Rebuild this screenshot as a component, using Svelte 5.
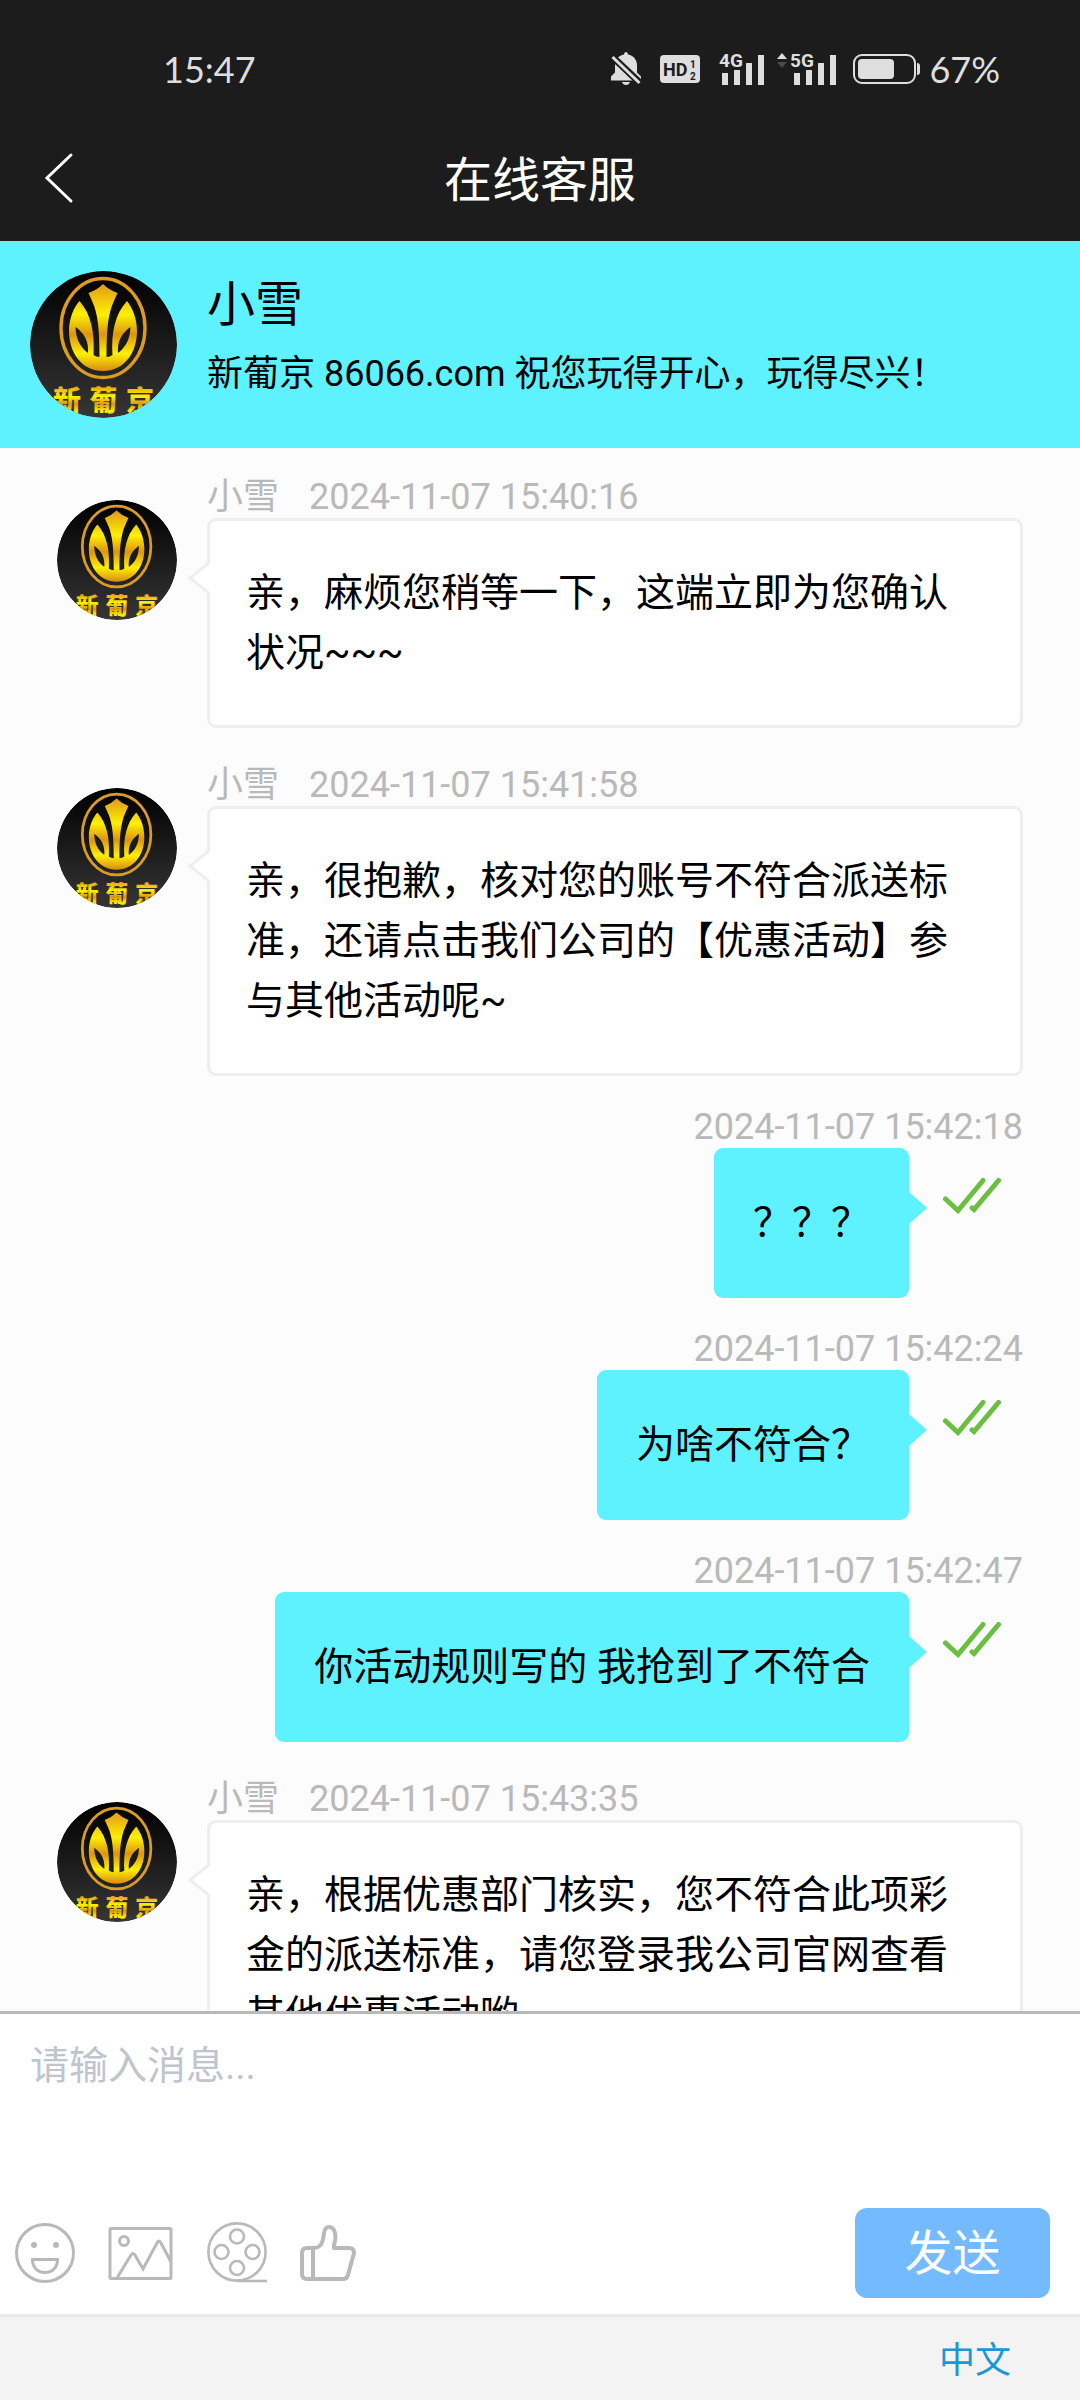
<script>
    const shopName = ["新", "葡", "京"];

    let draft = $state("");

    const messages = [
        {
            from: "小雪",
            time: "2024-11-07 15:40:16",
            text: "亲，麻烦您稍等一下，这端立即为您确认状况~~~",
        },
        {
            from: "小雪",
            time: "2024-11-07 15:41:58",
            text: "亲，很抱歉，核对您的账号不符合派送标准，还请点击我们公司的【优惠活动】参与其他活动呢~",
        },
        { time: "2024-11-07 15:42:18", text: "？？？" },
        { time: "2024-11-07 15:42:24", text: "为啥不符合？" },
        { time: "2024-11-07 15:42:47", text: "你活动规则写的 我抢到了不符合" },
        {
            from: "小雪",
            time: "2024-11-07 15:43:35",
            text: "亲，根据优惠部门核实，您不符合此项彩金的派送标准，请您登录我公司官网查看其他优惠活动哟",
        },
    ];
</script>

{#snippet avatar()}
    <svg viewBox="0 0 147 147" aria-hidden="true">
        <defs>
            <linearGradient id="dark" x1="0" y1="0" x2="0" y2="1">
                <stop offset="0" stop-color="#000" />
                <stop offset="1" stop-color="#363636" />
            </linearGradient>
            <linearGradient id="gold" x1="0" y1="0" x2="0" y2="1">
                <stop offset="0" stop-color="#e39a16" />
                <stop offset="0.35" stop-color="#fdf004" />
                <stop offset="0.58" stop-color="#dd9510" />
                <stop offset="0.8" stop-color="#fdf004" />
                <stop offset="1" stop-color="#d98b12" />
            </linearGradient>
        </defs>
        <circle cx="73.5" cy="73.5" r="73.5" fill="url(#dark)" />
        <ellipse cx="73" cy="57" rx="42" ry="49.5" fill="none" stroke="#dc9c22" stroke-width="3.4" />
        <path
            d="M73 13Q79 19 87.5 22L83.5 31C78 43 76.5 60 76.5 86Q80 86 82.5 84C81 62 85 43 97 30C102 36 107 47 107 60C107 82 94 100 73 100C52 100 39 82 39 60C39 47 44 36 49.5 30C61 43 65 62 63.5 84Q66 86 69.5 86C69.5 60 68 43 62.5 31L58.5 22Q67 19 73 13Z"
            fill="url(#gold)"
        />
        <path d="M45.5 56C54 62 59 70 58 82C50 76 46 68 45.5 56ZM100.5 56C92 62 87 70 88 82C96 76 100 68 100.5 56Z" fill="#1b1b1b" />
        {#each shopName as char, i}
            <text x={37 + i * 36.5} y="140" text-anchor="middle" fill="url(#gold)">{char}</text>
        {/each}
    </svg>
{/snippet}

<div class="page">
    <header>
        <div class="status-bar">
            <span class="clock">15:47</span>
            <div class="status-icons">
                <svg class="bell" width="30" height="34" viewBox="0 0 30 34" fill="#dedede">
                    <path d="M15 0q2 0 2 2.5c6 1 9 6 9 11v7l4 4v4H0v-4l4-4v-7c0-5 3-10 9-11Q13 0 15 0ZM11 30h8q-1 3-4 3t-4-3Z" />
                    <path d="M0 3.5 29 31" stroke="#1c1c1c" stroke-width="7" />
                    <path d="M1.5 5 28.5 31" stroke="#dedede" stroke-width="3" />
                </svg>
                <svg class="hd" width="40" height="28" viewBox="0 0 40 28">
                    <rect width="40" height="28" rx="4" fill="#dedede" />
                    <g fill="#1c1c1c" font-weight="700">
                        <text x="3" y="21" font-size="18">HD</text>
                        <text x="30" y="13" font-size="10">1</text>
                        <text x="30" y="25" font-size="10">2</text>
                    </g>
                </svg>
                <svg class="signal" width="46" height="44" viewBox="0 -6 46 44" fill="#dedede">
                    <text x="0" y="14" font-size="19" font-weight="700">4G</text>
                    <path d="M3 20h6v12H3zM15 17h6v15h-6zM27 10h6v22h-6zM39 2h6v30h-6z" />
                </svg>
                <svg class="signal5" width="60" height="44" viewBox="0 -6 60 44" fill="#dedede">
                    <path d="M0 6 5 0l5 6z" />
                    <path d="M0 9h10l-5 6z" fill="#4a4a4a" />
                    <text x="13" y="14" font-size="19" font-weight="700">5G</text>
                    <path d="M17 20h6v12h-6zM29 17h6v15h-6zM41 10h6v22h-6zM53 2h6v30h-6z" />
                </svg>
                <svg width="68" height="30" viewBox="0 0 68 30">
                    <rect x="1" y="1" width="61" height="28" rx="8" fill="none" stroke="#dedede" stroke-width="2" />
                    <rect x="5" y="5" width="36" height="20" rx="4" fill="#dedede" />
                    <path d="M64 9q3 0 3 3v6q0 3-3 3z" fill="#dedede" />
                </svg>
                <span class="percent">67%</span>
            </div>
        </div>
        <div class="title-bar">
            <button class="back" aria-label="返回">
                <svg width="30" height="52" viewBox="0 0 30 52">
                    <path d="M27 3 3 26l24 23" fill="none" stroke="#fff" stroke-width="3" stroke-linecap="round" />
                </svg>
            </button>
            <h1>在线客服</h1>
        </div>
    </header>

    <section class="agent">
        <div class="agent-avatar">{@render avatar()}</div>
        <div>
            <h2>小雪</h2>
            <p>新葡京 86066.com 祝您玩得开心，玩得尽兴！</p>
        </div>
    </section>

    <main>
        {#each messages as message}
            {#if message.from}
                <article class="message received">
                    <div class="avatar">{@render avatar()}</div>
                    <div class="body">
                        <div class="meta">
                            <span>{message.from}</span>
                            <time>{message.time}</time>
                        </div>
                        <div class="bubble">
                            <svg class="tail" width="23" height="32" viewBox="0 0 23 32">
                                <path d="M23 0 3 16l20 16" fill="#fff" stroke="#eee" stroke-width="3" />
                            </svg>
                            {message.text}
                        </div>
                    </div>
                </article>
            {:else}
                <article class="message sent">
                    <div class="meta"><time>{message.time}</time></div>
                    <div class="row">
                        <div class="bubble">
                            {message.text}
                            <svg class="tail" width="18" height="32" viewBox="0 0 18 32">
                                <path d="M0 0 18 16 0 32z" fill="#5ef1ff" />
                            </svg>
                        </div>
                        <svg class="ticks" width="58" height="36" viewBox="0 0 58 36">
                            <path d="M2.5 21 15 32.5 40 2.500M55.5 2.5 31 31.5l-2-1.5" fill="none" stroke="#6abf40" stroke-width="5" stroke-linecap="round" />
                        </svg>
                    </div>
                </article>
            {/if}
        {/each}
    </main>

    <section class="composer">
        <textarea bind:value={draft} placeholder="请输入消息..." aria-label="请输入消息"></textarea>
        <div class="toolbar">
            <button aria-label="表情">
                <svg width="60" height="60" viewBox="0 0 60 60" stroke-width="3">
                    <circle cx="30" cy="30" r="28.5" />
                    <circle cx="19" cy="22" r="3" class="solid" />
                    <circle cx="41" cy="22" r="3" class="solid" />
                    <path d="M17.5 36.5h25c0 8-5 13-12.5 13s-12.5-5-12.5-13Z" />
                </svg>
            </button>
            <button aria-label="图片">
                <svg width="66" height="60" viewBox="0 0 66 60" stroke-width="3">
                    <rect x="2" y="5.5" width="61" height="50" rx="1" />
                    <circle cx="16" cy="18" r="4.5" />
                    <path d="m9 55 14-23q2-3 4 0l8 14 14-26q2-4 4 0l10 19" />
                </svg>
            </button>
            <button aria-label="视频">
                <svg width="60" height="62" viewBox="0 0 60 62" stroke-width="2.6">
                    <circle cx="30" cy="30" r="28.6" />
                    <circle cx="30" cy="14.5" r="7" />
                    <circle cx="14.5" cy="30" r="7" />
                    <circle cx="45.5" cy="30" r="7" />
                    <circle cx="30" cy="46" r="7" />
                    <path d="M30 59h30" />
                </svg>
            </button>
            <button aria-label="点赞">
                <svg width="57" height="60" viewBox="0 0 57 60" stroke-width="4">
                    <path d="M13 25H7q-5 0-5 5v21q0 5 5 5h36q4 0 5-4l6-22q0-5-5-5H34V22c3-9 1-18-5-18q-4 0-5 6c-1 10-3 15-11 15v31" stroke-linejoin="round" />
                </svg>
            </button>
            <button class="send">发送</button>
        </div>
    </section>

    <footer>
        <a href="#language">中文</a>
    </footer>
</div>

<style>
    :global(body) {
        margin: 0;
    }

    .page {
        display: flex;
        flex-direction: column;
        height: 100vh;
        background: #fcfcfc;
        color: #000;
        font-family: Roboto, "Noto Sans CJK SC", sans-serif;
        overflow: hidden;
    }

    h1,
    h2,
    p {
        margin: 0;
        font-weight: inherit;
    }

    svg {
        display: block;
        flex-shrink: 0;
    }

    button {
        padding: 0;
        border: 0;
        background: none;
        font: inherit;
        cursor: pointer;
    }

    header {
        background: #1c1c1c;
        color: #fff;
    }

    .status-bar {
        display: flex;
        align-items: center;
        justify-content: space-between;
        padding: 39px 80px 21px 163px;
        color: #dedede;
        font-family: Lato, sans-serif;
        font-size: 36px;
        line-height: 60px;
    }

    .status-icons {
        display: flex;
        align-items: center;
    }

    .status-icons text {
        font-family: Roboto, sans-serif;
    }

    .bell,
    .hd {
        margin-right: 19px;
    }

    .signal {
        margin-right: 12px;
    }

    .signal5 {
        margin-right: 16px;
    }

    .percent {
        margin-left: 8px;
    }

    .title-bar {
        display: grid;
        grid-template-columns: 120px 1fr 120px;
        align-items: center;
        padding-bottom: 5px;
    }

    .back {
        display: flex;
        align-items: center;
        padding: 32px 44px;
    }

    h1 {
        padding-top: 6px;
        font-size: 48px;
        line-height: 60px;
        text-align: center;
    }

    .agent {
        display: flex;
        gap: 30px;
        padding: 30px;
        background: #5ef1ff;
    }

    .agent-avatar {
        width: 147px;
        flex-shrink: 0;
    }

    .agent-avatar svg,
    .avatar svg {
        width: 100%;
        border-radius: 50%;
    }

    .agent-avatar text,
    .avatar text {
        font-size: 28px;
        font-weight: 900;
    }

    h2 {
        font-size: 48px;
        line-height: 68px;
    }

    p {
        font-size: 36px;
        line-height: 70px;
    }

    main {
        flex: 1;
        min-height: 0;
        padding: 16px 57px 0;
        overflow: hidden;
    }

    .message {
        margin-bottom: 24px;
    }

    .meta {
        padding-top: 6px;
        color: #b9b9b9;
        font-size: 36px;
        line-height: 42px;
    }

    .bubble {
        position: relative;
        border-radius: 9px;
        font-size: 39px;
        line-height: 60px;
    }

    .tail {
        position: absolute;
    }

    .received {
        display: flex;
        gap: 30px;
    }

    .received .avatar {
        width: 120px;
        flex-shrink: 0;
        margin-top: 36px;
    }

    .received .body {
        flex: 1;
    }

    .received .meta {
        display: flex;
        gap: 30px;
        padding-top: 12px;
    }

    .received .bubble {
        padding: 42px 36px;
        border: 3px solid #eee;
        background: #fff;
    }

    .received .tail {
        top: 41px;
        left: -23px;
    }

    .sent .meta {
        text-align: right;
    }

    .sent .row {
        display: flex;
        justify-content: flex-end;
        gap: 34px;
        padding-right: 22px;
    }

    .sent .bubble {
        padding: 45px 39px;
        background: #5ef1ff;
    }

    .sent .tail {
        top: 44px;
        right: -18px;
    }

    .ticks {
        margin-top: 30px;
    }

    .composer {
        display: flex;
        flex-direction: column;
        border-top: 3px solid #b9b9b9;
        background: #fff;
    }

    textarea {
        height: 194px;
        box-sizing: border-box;
        padding: 22px 30px;
        border: 0;
        outline: 0;
        resize: none;
        background: none;
        font: inherit;
        font-size: 39px;
        line-height: 60px;
    }

    textarea::placeholder {
        color: #c0c4cc;
        opacity: 1;
    }

    .toolbar {
        display: flex;
        align-items: center;
        gap: 33px;
        padding: 0 30px 16px 15px;
    }

    .toolbar svg {
        fill: none;
        stroke: #b9b9b9;
    }

    .toolbar .solid {
        fill: #b9b9b9;
        stroke: none;
    }

    .send {
        margin-left: auto;
        width: 195px;
        padding-top: 2px;
        border-radius: 12px;
        background: #74baff;
        color: #fff;
        font-size: 48px;
        line-height: 88px;
    }

    footer {
        padding: 13px 69px 7px;
        border-top: 3px solid #ebebeb;
        background: #f3f3f3;
        font-size: 36px;
        line-height: 63px;
        text-align: right;
    }

    a {
        color: #1a97d5;
        text-decoration: none;
    }
</style>
